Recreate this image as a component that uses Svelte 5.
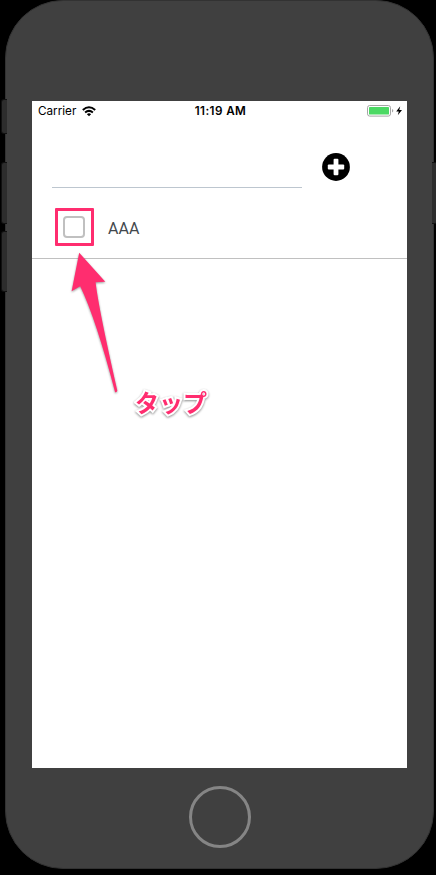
<script>
  let draft = $state('');
  let items = $state([{ label: 'AAA', done: false }]);

  function add() {
    if (!draft.trim()) return;
    items.push({ label: draft.trim(), done: false });
    draft = '';
  }
</script>

<div class="stage">
  <i class="key mute"></i>
  <i class="key up"></i>
  <i class="key down"></i>
  <i class="key power"></i>
  <div class="phone">
    <main class="screen">
      <header class="status">
        <div class="carrier">
          <span>Carrier</span>
          <svg width="14" height="11" viewBox="0 0 14 11" fill="none" stroke="#000" stroke-width="2">
            <path d="M.8 3.9Q7-1.4 13.2 3.9M3.1 6.5Q7 3.2 10.9 6.5" />
            <path d="M7 10.3 4.9 8.2Q7 6.5 9.1 8.2Z" fill="#000" stroke="none" />
          </svg>
        </div>
        <time>11:19 AM</time>
        <div class="power-state">
          <svg width="36" height="12" viewBox="0 0 36 12">
            <rect x=".5" y=".5" width="23" height="10.6" rx="2.2" fill="#fff" stroke="#a5a5a5" />
            <rect x="2" y="2" width="20" height="7.6" rx=".7" fill="#4cd964" />
            <path d="M25 4.1q1.3.4 1.3 1.7T25 7.5z" fill="#a5a5a5" />
            <path d="M33.2 1.2 29.2 6.5H31.8L30.8 10.3 35 4.9H32.3Z" fill="#000" />
          </svg>
        </div>
      </header>

      <div class="entry">
        <input aria-label="todo" bind:value={draft} />
        <button class="add" aria-label="add" onclick={add}>
          <svg width="28" height="28" viewBox="0 0 28 28">
            <circle cx="14" cy="14" r="13.9" />
            <g fill="#fff">
              <rect x="11.6" y="5.8" width="4.8" height="16.4" rx="1" />
              <rect x="5.8" y="11.6" width="16.4" height="4.8" rx="1" />
            </g>
          </svg>
        </button>
      </div>

      {#each items as item}
        <div class="row">
          <div class="highlight">
            <button
              class="check"
              class:done={item.done}
              aria-label={item.label}
              onclick={() => (item.done = !item.done)}
            ></button>
          </div>
          <span class="label">{item.label}</span>
        </div>
      {/each}
    </main>
    <div class="home"></div>
  </div>

  <svg class="arrow" width="60" height="155" viewBox="65 245 60 155">
    <path d="M79.2 252.8 105.3 281.8 95.6 282.2Q98.5 308 117.3 390.6 117 392.6 115.1 392.2 96 319 80.2 286.2L71.6 291.2Z" fill="#ff2d6f" />
  </svg>
  <div class="tap">タップ</div>
</div>

<style>
  :global(body) {
    background: #000;
  }
  .stage {
    position: relative;
    box-sizing: border-box;
    width: 436px;
    height: 875px;
    padding-left: 5px;
    background: #000;
    overflow: hidden;
    font-family: Inter, 'Noto Sans CJK JP', sans-serif;
  }
  .phone {
    position: relative;
    box-sizing: border-box;
    width: 429px;
    height: 869px;
    padding: 100px 26px 0;
    border: 1px solid #323232;
    border-radius: 58px;
    background: #404040;
  }
  .key {
    position: absolute;
    z-index: 1;
    box-sizing: border-box;
    left: 2px;
    width: 5px;
    height: 60px;
    background: #2d2d2d;
    border-radius: 2px 0 0 2px;
    box-shadow: 0 0 0 1px #111;
    clip-path: inset(-1px 0 -1px -1px);
  }
  .mute {
    top: 100px;
    height: 33px;
  }
  .up {
    top: 163px;
  }
  .down {
    top: 232px;
    height: 59px;
  }
  .power {
    top: 163px;
    left: 432px;
    border-radius: 0 2px 2px 0;
    clip-path: inset(-1px -1px -1px 0);
  }
  .screen {
    width: 375px;
    height: 667px;
    background: #fff;
  }
  .status {
    display: grid;
    grid-template-columns: 1fr auto 1fr;
    align-items: center;
    height: 20px;
    padding: 0 4px 0 6px;
    font-size: 11.7px;
    line-height: 20px;
    color: #000;
  }
  .carrier {
    display: flex;
    align-items: center;
    gap: 6px;
  }
  .carrier span,
  .status time {
    padding-top: 1px;
    line-height: 19px;
  }
  .status time {
    font-size: 11.7px;
    font-weight: 600;
    letter-spacing: 0.4px;
  }
  .power-state {
    display: flex;
    justify-content: flex-end;
  }
  svg {
    display: block;
  }
  .entry {
    display: flex;
    padding: 32px 0 0 20px;
    gap: 20px;
  }
  input {
    box-sizing: border-box;
    width: 250px;
    height: 35px;
    padding: 0;
    border: 0;
    border-bottom: 1px solid #bdc6cf;
    outline: 0;
    background: none;
    font: 16px Inter, sans-serif;
  }
  button {
    padding: 0;
    border: 0;
    background: none;
  }
  .add {
    width: 28px;
    height: 28px;
  }
  .row {
    display: flex;
    align-items: center;
    box-sizing: border-box;
    height: 71px;
    padding: 8px 23px 0;
    gap: 14px;
    border-bottom: 1px solid #c0c0c0;
  }
  .highlight {
    display: flex;
    align-items: center;
    justify-content: center;
    box-sizing: border-box;
    width: 39px;
    height: 38px;
    margin-bottom: 1px;
    border: 3px solid #ff2d6f;
    border-radius: 1px;
  }
  .check {
    box-sizing: border-box;
    width: 22px;
    height: 22px;
    margin-right: 1px;
    border: 2px solid #c0c0c0;
    border-radius: 4px;
  }
  .check.done {
    background: #c0c0c0;
  }
  .label {
    padding-top: 3px;
    color: #43484d;
    font: 16px/20px Roboto, sans-serif;
  }
  .home {
    box-sizing: border-box;
    width: 62px;
    height: 62px;
    margin: 18px auto 0;
    border: 3px solid #858585;
    border-radius: 50%;
  }
  .arrow {
    position: absolute;
    left: 65px;
    top: 245px;
    pointer-events: none;
    filter: drop-shadow(0 1px 1px rgb(0 0 0 / 0.4));
  }
  .tap {
    position: absolute;
    left: 135px;
    top: 384px;
    color: #ff2d6f;
    font: 700 24px/36px 'Noto Sans CJK JP', sans-serif;
    -webkit-text-stroke: 4px #fff;
    paint-order: stroke fill;
    filter: drop-shadow(0 1px 1px rgb(0 0 0 / 0.45));
  }
</style>
